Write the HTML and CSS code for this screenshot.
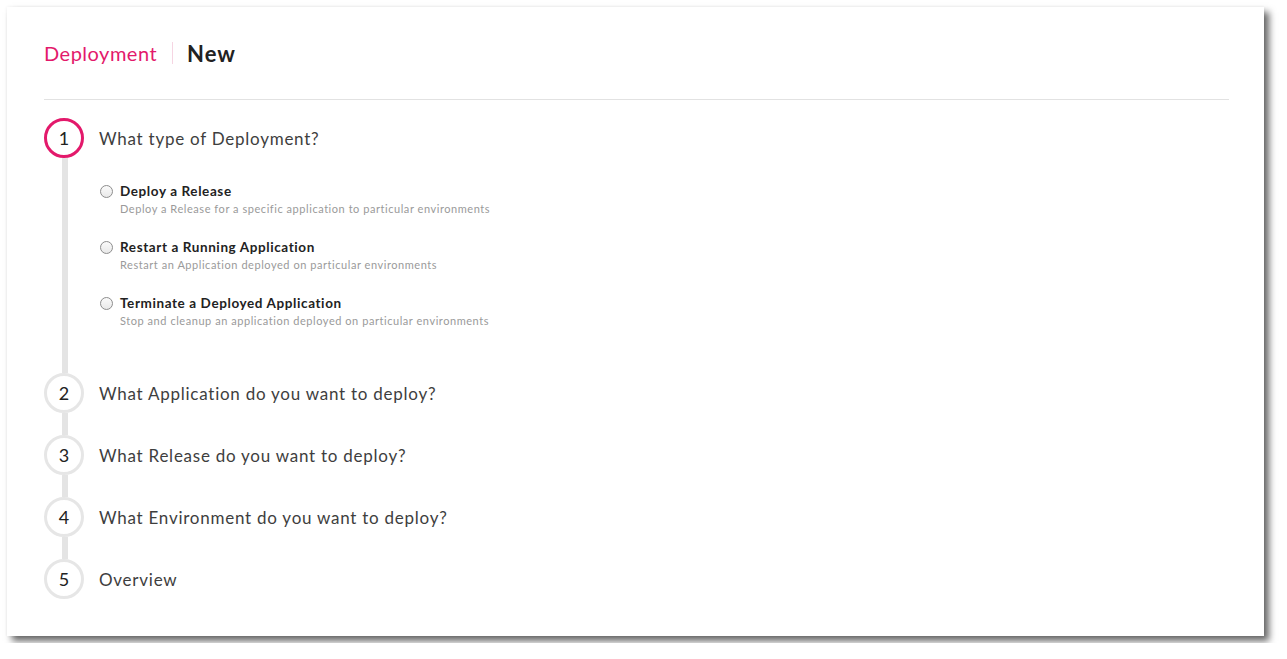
FILE: index.html
```html
<!DOCTYPE html>
<html>
<head>
<meta charset="utf-8">
<link rel="stylesheet" href="styles.css">
</head>
<body>
<div class="card">
  <div class="header">
    <span class="crumb">Deployment</span>
    <span class="sep"></span>
    <span class="page-title">New</span>
  </div>
  <div class="rule"></div>
  <div class="steps">
    <div class="step step-active">
      <div class="rail">
        <div class="num">1</div>
        <div class="connector"></div>
      </div>
      <div class="body body-open">
        <div class="step-title">What type of Deployment?</div>
        <div class="options">
          <label class="option">
            <span class="radio"></span>
            <span class="opt-text">
              <span class="opt-title">Deploy a Release</span>
              <span class="opt-desc">Deploy a Release for a specific application to particular environments</span>
            </span>
          </label>
          <label class="option">
            <span class="radio"></span>
            <span class="opt-text">
              <span class="opt-title">Restart a Running Application</span>
              <span class="opt-desc">Restart an Application deployed on particular environments</span>
            </span>
          </label>
          <label class="option">
            <span class="radio"></span>
            <span class="opt-text">
              <span class="opt-title">Terminate a Deployed Application</span>
              <span class="opt-desc">Stop and cleanup an application deployed on particular environments</span>
            </span>
          </label>
        </div>
      </div>
    </div>
    <div class="step">
      <div class="rail">
        <div class="num">2</div>
        <div class="connector"></div>
      </div>
      <div class="body"><div class="step-title">What Application do you want to deploy?</div></div>
    </div>
    <div class="step">
      <div class="rail">
        <div class="num">3</div>
        <div class="connector"></div>
      </div>
      <div class="body"><div class="step-title">What Release do you want to deploy?</div></div>
    </div>
    <div class="step">
      <div class="rail">
        <div class="num">4</div>
        <div class="connector"></div>
      </div>
      <div class="body"><div class="step-title">What Environment do you want to deploy?</div></div>
    </div>
    <div class="step step-last">
      <div class="rail">
        <div class="num">5</div>
      </div>
      <div class="body body-last"><div class="step-title">Overview</div></div>
    </div>
  </div>
</div>
</body>
</html>
```

FILE: styles.css
```css
html, body {
  margin: 0;
  padding: 0;
  background: #ffffff;
}
body {
  padding: 7px;
  font-family: Lato, "Liberation Sans", sans-serif;
  color: #333;
}
.card {
  width: 1257px;
  height: 629px;
  box-sizing: border-box;
  background: #fff;
  padding: 30px 35px 0 37px;
  box-shadow: 5px 5px 7px rgba(0, 0, 0, 0.6), 0 0 3px rgba(0, 0, 0, 0.06);
}
.header {
  display: flex;
  align-items: center;
  height: 32px;
}
.crumb {
  font-size: 20px;
  color: #e3196b;
  letter-spacing: 0.5px;
}
.sep {
  width: 1px;
  height: 22px;
  background: #f6d5e2;
  margin: 0 14px 0 15px;
}
.page-title {
  font-size: 22px;
  font-weight: 700;
  color: #222;
  letter-spacing: 1px;
}
.rule {
  height: 1px;
  background: #e2e2e2;
  margin-top: 30px;
}
.steps {
  margin-top: 18px;
  display: flex;
  flex-direction: column;
}
.step {
  display: flex;
}
.rail {
  width: 40px;
  display: flex;
  flex-direction: column;
  align-items: center;
}
.num {
  width: 40px;
  height: 40px;
  box-sizing: border-box;
  border-radius: 50%;
  border: 3px solid #e6e6e6;
  display: flex;
  align-items: center;
  justify-content: center;
  font-size: 18px;
  color: #222;
  flex: none;
}
.step-active .num {
  border-color: #e3196b;
}
.connector {
  flex: 1;
  width: 6px;
  background: #e4e4e4;
  margin-left: 2px;
}
.body {
  margin-left: 15px;
  padding-bottom: 22px;
}
.body-open {
  padding-bottom: 45px;
}
.body-last {
  padding-bottom: 0;
}
.step-title {
  height: 40px;
  line-height: 41px;
  font-size: 17px;
  color: #3e3e3e;
  letter-spacing: 0.75px;
}
.options {
  margin-top: 24px;
  display: flex;
  flex-direction: column;
  gap: 22px;
}
.option {
  display: flex;
  align-items: flex-start;
}
.radio {
  width: 13px;
  height: 13px;
  box-sizing: border-box;
  border: 1px solid #8d8d8d;
  border-radius: 50%;
  background: linear-gradient(#fafafa, #e9e9e9);
  margin: 3px 7px 0 1px;
  flex: none;
}
.opt-text {
  display: flex;
  flex-direction: column;
}
.opt-title {
  font-size: 13.5px;
  font-weight: 700;
  line-height: 18px;
  color: #222;
  letter-spacing: 0.6px;
}
.opt-desc {
  font-size: 11px;
  line-height: 14px;
  margin-top: 2px;
  color: #9a9a9a;
  letter-spacing: 0.55px;
}
```
